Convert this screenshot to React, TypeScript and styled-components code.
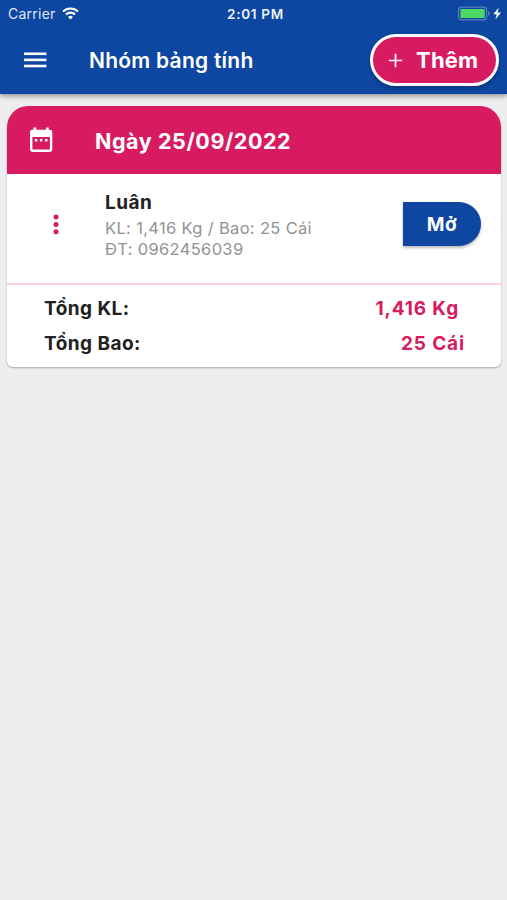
import React from "react";
import styled, { createGlobalStyle } from "styled-components";

const BLUE = "#0d47a1";
const PINK = "#d81b60";

const GlobalStyle = createGlobalStyle`
  *, *::before, *::after { box-sizing: border-box; }
  body { margin: 0; background: #eeeeee; font-family: Inter, "Noto Sans", sans-serif; }
`;

const Screen = styled.div`
  min-height: 900px;
  background: #eeeeee;
`;

const Header = styled.header`
  height: 94px;
  background: ${BLUE};
  color: #fff;
  box-shadow: 0 2px 5px rgba(0, 0, 0, 0.4);
`;

const StatusBar = styled.div`
  display: grid;
  grid-template-columns: 1fr auto 1fr;
  align-items: center;
  height: 27px;
  padding: 0 5px 0 8px;
`;

const Carrier = styled.div`
  display: flex;
  align-items: center;
  gap: 6px;
  font-size: 14px;
  letter-spacing: 0.25px;
  color: #dfe8f5;
`;

const Clock = styled.div`
  margin-left: 1px;
  font-size: 13.5px;
  font-weight: 600;
  letter-spacing: 0.7px;
  color: #eef3fa;
`;

const Power = styled.div`
  display: flex;
  justify-content: flex-end;
`;

const Toolbar = styled.div`
  display: flex;
  align-items: center;
  height: 67px;
  padding: 0 8.5px 0 19px;
`;

const Title = styled.h1`
  flex: 1;
  margin: 0 0 0 38px;
  font-size: 21px;
  line-height: 26px;
  font-weight: 600;
  letter-spacing: 0.25px;
`;

const AddButton = styled.button`
  display: flex;
  align-items: center;
  gap: 13px;
  width: 128.5px;
  height: 52px;
  margin-top: -1px;
  padding: 0 0 0 15px;
  border: 3px solid #fff;
  border-radius: 26px;
  background: ${PINK};
  color: #fff;
  font: 700 22px/26px Inter, sans-serif;
  letter-spacing: 0.2px;
  box-shadow: 0 2px 4px rgba(0, 0, 0, 0.3);
`;

const Card = styled.section`
  margin: 12px 6px 0 7px;
  border-radius: 21px 21px 6px 6px;
  background: #fff;
  overflow: hidden;
  box-shadow: 0 1px 2px rgba(0, 0, 0, 0.3);
`;

const CardHeader = styled.div`
  display: flex;
  align-items: center;
  height: 68px;
  padding-left: 20px;
  background: ${PINK};
  color: #fff;
`;

const CardTitle = styled.h2`
  margin: 1px 0 0 40px;
  font-size: 21.5px;
  line-height: 26px;
  font-weight: 700;
  letter-spacing: 0.57px;
`;

const Entry = styled.div`
  display: flex;
  align-items: flex-start;
  height: 109px;
  padding: 0 20px 0 35px;
`;

const MenuButton = styled.div`
  display: flex;
  width: 28px;
  height: 28px;
  margin-top: 36px;
`;

const Details = styled.div`
  flex: 1;
  margin-left: 35px;
  padding-top: 16px;
`;

const Name = styled.div`
  font-size: 19px;
  line-height: 25px;
  margin-bottom: 3px;
  font-weight: 700;
  letter-spacing: 0.5px;
  color: #212121;
`;

const Info = styled.div`
  font-size: 16.5px;
  line-height: 20.5px;
  letter-spacing: 0.33px;
  color: #929292;
  white-space: nowrap;
`;

const OpenButton = styled.button`
  width: 78px;
  height: 44px;
  margin-top: 28px;
  padding: 2px 0 0;
  border: 0;
  border-radius: 0 22px 22px 0;
  background: ${BLUE};
  color: #fff;
  font: 700 19px/22px Inter, sans-serif;
  letter-spacing: 0.5px;
  box-shadow: 0 2px 3px rgba(0, 0, 0, 0.28);
`;

const Totals = styled.dl`
  margin: 0;
  padding: 6px 0 6px 37px;
  border-top: 2px solid #f8d3df;
`;

const TotalRow = styled.div<{ $inset: number }>`
  display: flex;
  align-items: center;
  justify-content: space-between;
  height: 35px;
  padding-right: ${(p) => p.$inset}px;
  font-size: 19px;
  line-height: 24px;
  font-weight: 700;
  letter-spacing: 0.45px;
  color: #212121;
`;

const TotalValue = styled.dd`
  margin: 0;
  color: ${PINK};
  letter-spacing: 0.85px;
`;

const WifiIcon = () => (
  <svg width="17" height="13" viewBox="0 0 17 13" fill="none" stroke="#fff" strokeWidth="2.1">
    <path d="M1 4.6a10.6 10.6 0 0 1 15 0" />
    <path d="M3.9 7.5a6.5 6.5 0 0 1 9.2 0" />
    <path d="M6 9.9a3.55 3.55 0 0 1 5 0L8.5 12.4z" fill="#fff" stroke="none" />
  </svg>
);

const BatteryIcon = () => (
  <svg width="44" height="15" viewBox="0 0 44 15">
    <rect x="0.6" y="1.1" width="28" height="12.8" rx="3" fill="none" stroke="#5d80bb" strokeWidth="1.2" />
    <rect x="2.4" y="2.9" width="24.4" height="9.2" rx="1.2" fill="#4cd964" />
    <path d="M30 5.3q1.8.6 1.8 2.2T30 9.7z" fill="#5d80bb" />
    <path d="M40.8 1.6L35.3 8.3h3.3L37.4 13.5l5.6-7.1h-3.5z" fill="#fff" />
  </svg>
);

const MenuIcon = () => (
  <svg width="32" height="32" viewBox="0 0 32 32" fill="#fff">
    <rect x="5" y="7.5" width="22.4" height="2.6" />
    <rect x="5" y="13.6" width="22.4" height="2.6" />
    <rect x="5" y="19.7" width="22.4" height="2.6" />
  </svg>
);

const PlusIcon = () => (
  <svg width="15" height="15" viewBox="0 0 15 15" stroke="#fff" strokeWidth="1.7">
    <path d="M7.5 0.8v13.4M0.8 7.5h13.4" />
  </svg>
);

const CalendarIcon = () => (
  <svg width="28" height="28" viewBox="0 0 28 28" fill="#fff">
    <path
      fillRule="evenodd"
      d="M6.5 1.5h2.7v2.3h9.8V1.5h2.7v2.3h1.2a2.4 2.4 0 0 1 2.4 2.4v17.4a2.4 2.4 0 0 1-2.4 2.4H5.4A2.4 2.4 0 0 1 3 23.6V6.2a2.4 2.4 0 0 1 2.4-2.4h1.1zM5.4 11v12.6h17.5V11z"
    />
    <path d="M7.8 13h2.5v2.5H7.8zM12.9 13h2.5v2.5h-2.5zM18 13h2.5v2.5H18z" />
  </svg>
);

const MoreIcon = () => (
  <svg width="28" height="28" viewBox="0 0 28 28" fill={PINK}>
    <circle cx="14" cy="7.1" r="2.5" />
    <circle cx="14" cy="14.4" r="2.5" />
    <circle cx="14" cy="21.7" r="2.5" />
  </svg>
);

const totals = [
  { label: "Tổng KL:", value: "1,416 Kg", inset: 42 },
  { label: "Tổng Bao:", value: "25 Cái", inset: 36 },
];

export default function App() {
  return (
    <Screen>
      <GlobalStyle />
      <Header>
        <StatusBar>
          <Carrier>
            Carrier
            <WifiIcon />
          </Carrier>
          <Clock>2:01 PM</Clock>
          <Power>
            <BatteryIcon />
          </Power>
        </StatusBar>
        <Toolbar>
          <MenuIcon />
          <Title>Nhóm bảng tính</Title>
          <AddButton>
            <PlusIcon />
            Thêm
          </AddButton>
        </Toolbar>
      </Header>
      <Card>
        <CardHeader>
          <CalendarIcon />
          <CardTitle>Ngày 25/09/2022</CardTitle>
        </CardHeader>
        <Entry>
          <MenuButton>
            <MoreIcon />
          </MenuButton>
          <Details>
            <Name>Luân</Name>
            <Info>KL: 1,416 Kg / Bao: 25 Cái</Info>
            <Info>ĐT: 0962456039</Info>
          </Details>
          <OpenButton>Mở</OpenButton>
        </Entry>
        <Totals>
          {totals.map((t) => (
            <TotalRow key={t.label} $inset={t.inset}>
              <dt>{t.label}</dt>
              <TotalValue>{t.value}</TotalValue>
            </TotalRow>
          ))}
        </Totals>
      </Card>
    </Screen>
  );
}
